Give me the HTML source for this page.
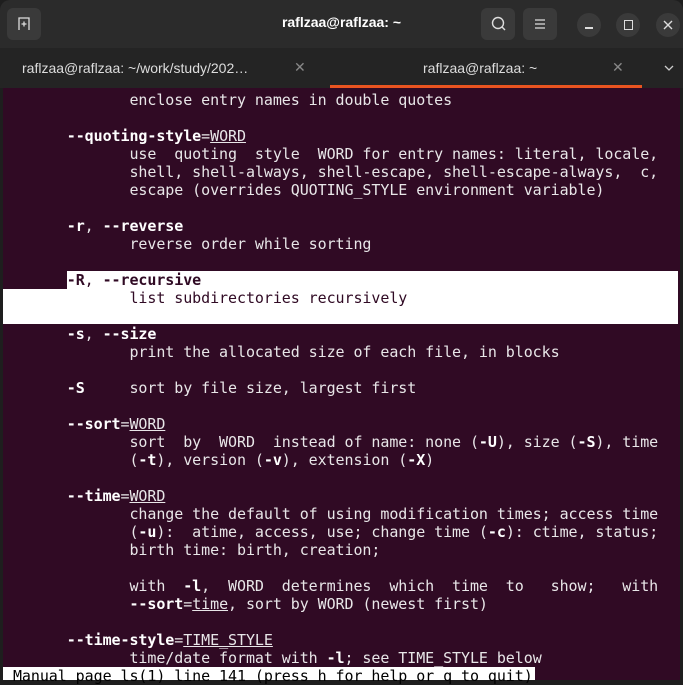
<!DOCTYPE html>
<html><head><meta charset="utf-8"><style>
*{margin:0;padding:0;box-sizing:border-box}
body{width:683px;height:680px;overflow:hidden;background:#1e1e1e;position:relative;font-family:"Liberation Sans",sans-serif}
.title{position:absolute;left:0;top:0;width:683px;height:48px;background:#2b2b2b;border-radius:10px 10px 0 0}
.tabs{position:absolute;left:0;top:48px;width:683px;height:40px;background:#242424}
.btn{position:absolute;top:8px;width:34px;height:32px;background:#3a3a3a;border-radius:6px}
.circ{position:absolute;top:13px;width:24px;height:24px;border-radius:50%;background:#3a3a3a}
.term{position:absolute;left:3px;top:88px;width:677px;height:592px;background:#300a24}
pre{position:absolute;left:4px;top:91px;font-family:"DejaVu Sans Mono","Liberation Mono",monospace;font-size:15px;line-height:18px;color:#e8e6e8;letter-spacing:-0.07px}
b{color:#fff}
u{text-decoration:underline}
.hl{position:absolute;background:#fff}
</style></head><body>
<div class="title"></div>
<div class="btn" style="left:7px"></div>
<svg style="position:absolute;left:15px;top:15px" width="18" height="18" viewBox="0 0 18 18"><path d="M4 15V3h10v12M6.5 9h5M9 6.5v5" stroke="#ddd" stroke-width="1.3" fill="none"/></svg>
<div style="position:absolute;left:0;width:683px;top:14px;text-align:center;color:#fff;font-weight:bold;font-size:14px">raflzaa@raflzaa: ~</div>
<div class="btn" style="left:481px"></div>
<svg style="position:absolute;left:489px;top:14px" width="20" height="20" viewBox="0 0 20 20"><circle cx="9" cy="9" r="5.5" stroke="#ddd" stroke-width="1.4" fill="none"/><path d="M13 13l3 3" stroke="#ddd" stroke-width="1.4"/></svg>
<div class="btn" style="left:523px"></div>
<svg style="position:absolute;left:531px;top:15px" width="18" height="18" viewBox="0 0 18 18"><path d="M4 5h10M4 9h10M4 13h10" stroke="#ddd" stroke-width="1.3"/></svg>
<div class="circ" style="left:577px"></div>
<div style="position:absolute;left:585px;top:27px;width:8px;height:1.5px;background:#ddd"></div>
<div class="circ" style="left:616px"></div>
<div style="position:absolute;left:624px;top:20px;width:9px;height:10px;border:1.4px solid #ddd"></div>
<div class="circ" style="left:656px"></div>
<svg style="position:absolute;left:662px;top:19px" width="12" height="12" viewBox="0 0 12 12"><path d="M2 2l8 8M10 2l-8 8" stroke="#ddd" stroke-width="1.4"/></svg>
<div class="tabs"></div>
<div style="position:absolute;left:22px;top:60px;color:#ddd;font-size:14px">raflzaa@raflzaa: ~/work/study/202…</div>
<div style="position:absolute;left:294px;top:59px;color:#888;font-size:14px">✕</div>
<div style="position:absolute;left:423px;top:60px;color:#ddd;font-size:14px">raflzaa@raflzaa: ~</div>
<div style="position:absolute;left:612px;top:59px;color:#888;font-size:14px">✕</div>
<svg style="position:absolute;left:663px;top:63px" width="12" height="10" viewBox="0 0 12 10"><path d="M2 3l4 4 4-4" stroke="#ccc" stroke-width="1.3" fill="none"/></svg>
<div style="position:absolute;left:330px;top:85px;width:312px;height:3px;background:#e95420"></div>
<div class="term"></div>
<div class="hl" style="left:67px;top:271px;width:611px;height:18px"></div>
<div class="hl" style="left:3px;top:289px;width:675px;height:35px"></div>
<div class="hl" style="left:3px;top:667px;width:532px;height:13px"></div>
<pre>              enclose entry names in double quotes

       <b>--quoting-style</b>=<u>WORD</u>
              use  quoting  style  WORD for entry names: literal, locale,
              shell, shell-always, shell-escape, shell-escape-always,  c,
              escape (overrides QUOTING_STYLE environment variable)

       <b>-r</b>, <b>--reverse</b>
              reverse order while sorting

       <b style="color:#300a24">-R</b><span style="color:#300a24">, </span><b style="color:#300a24">--recursive</b>
<span style="color:#300a24">              list subdirectories recursively</span>

       <b>-s</b>, <b>--size</b>
              print the allocated size of each file, in blocks

       <b>-S</b>     sort by file size, largest first

       <b>--sort</b>=<u>WORD</u>
              sort  by  WORD  instead of name: none (<b>-U</b>), size (<b>-S</b>), time
              (<b>-t</b>), version (<b>-v</b>), extension (<b>-X</b>)

       <b>--time</b>=<u>WORD</u>
              change the default of using modification times; access time
              (<b>-u</b>):  atime, access, use; change time (<b>-c</b>): ctime, status;
              birth time: birth, creation;

              with  <b>-l</b>,  WORD  determines  which  time  to   show;   with
              <b>--sort</b>=<u>time</u>, sort by WORD (newest first)

       <b>--time-style</b>=<u>TIME_STYLE</u>
              time/date format with <b>-l</b>; see TIME_STYLE below
<span style="color:#000"> Manual page ls(1) line 141 (press h for help or q to quit)</span></pre>
</body></html>
